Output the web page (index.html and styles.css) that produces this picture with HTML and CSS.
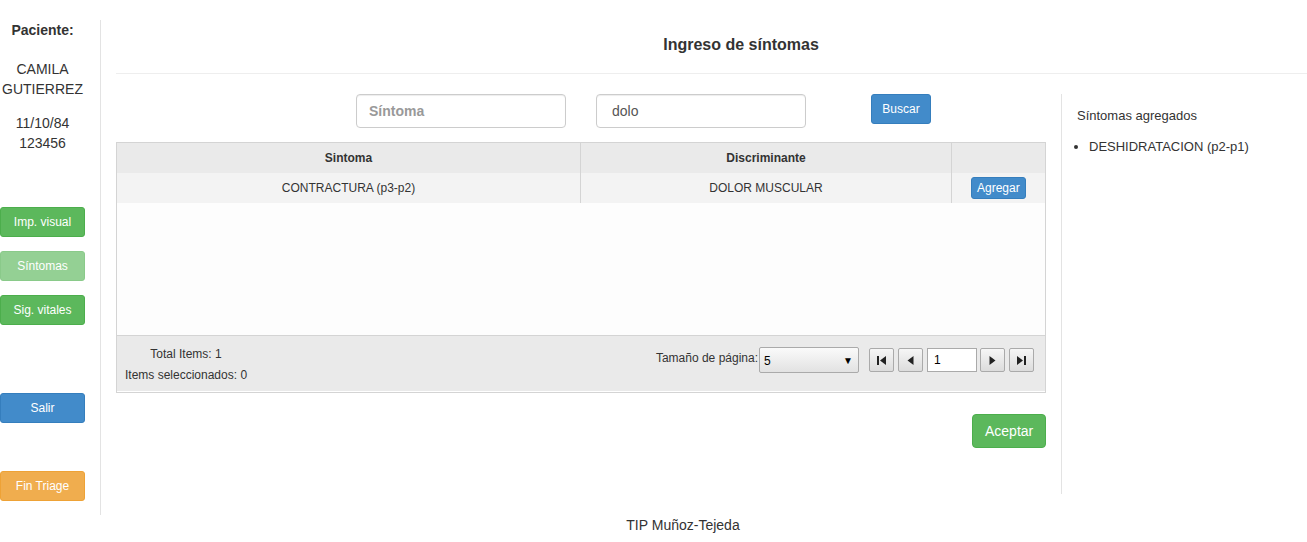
FILE: index.html
```html
<!DOCTYPE html>
<html lang="es">
<head>
<meta charset="utf-8">
<title>Ingreso de síntomas</title>
<link rel="stylesheet" href="styles.css">
</head>
<body>
<div class="page">
  <div class="layout">
    <aside class="sidebar">
      <div class="patient-label">Paciente:</div>
      <div class="patient-name">CAMILA<br>GUTIERREZ</div>
      <div class="patient-data">11/10/84<br>123456</div>
      <div class="nav">
        <button class="btn btn-sm btn-success">Imp. visual</button>
        <button class="btn btn-sm btn-success disabled">Síntomas</button>
        <button class="btn btn-sm btn-success">Sig. vitales</button>
      </div>
      <button class="btn btn-sm btn-primary salir">Salir</button>
      <button class="btn btn-sm btn-warning fin">Fin Triage</button>
    </aside>
    <main class="main">
      <header class="main-header"><h1>Ingreso de síntomas</h1></header>
      <div class="content">
        <section class="left">
          <div class="search-row">
            <input class="form-control" type="text" placeholder="Síntoma">
            <input class="form-control second" type="text" value="dolo">
            <button class="btn btn-sm btn-primary buscar">Buscar</button>
          </div>
          <div class="grid">
            <div class="grid-row grid-head">
              <div class="c1">Sintoma</div>
              <div class="c2">Discriminante</div>
              <div class="c3"></div>
            </div>
            <div class="grid-row grid-body-row">
              <div class="c1">CONTRACTURA (p3-p2)</div>
              <div class="c2">DOLOR MUSCULAR</div>
              <div class="c3"><button class="btn btn-xs btn-primary">Agregar</button></div>
            </div>
            <div class="grid-viewport"></div>
            <div class="grid-footer">
              <div class="totals">
                <div>Total Items: 1</div>
                <div>Items seleccionados: 0</div>
              </div>
              <div class="pager">
                <span class="page-size-label">Tamaño de página:</span>
                <div class="select"><span>5</span><span class="caret">▼</span></div>
                <div class="pager-btns">
                  <button class="pbtn" aria-label="primera"><svg width="11" height="11" viewBox="0 0 11 11"><rect x="1" y="1" width="2" height="9" fill="#222"/><path d="M10 1 L4 5.5 L10 10 Z" fill="#222"/></svg></button>
                  <button class="pbtn" aria-label="anterior"><svg width="11" height="11" viewBox="0 0 11 11"><path d="M8.5 1 L2.5 5.5 L8.5 10 Z" fill="#222"/></svg></button>
                  <input class="page-input" type="text" value="1">
                  <button class="pbtn" aria-label="siguiente"><svg width="11" height="11" viewBox="0 0 11 11"><path d="M2.5 1 L8.5 5.5 L2.5 10 Z" fill="#222"/></svg></button>
                  <button class="pbtn" aria-label="última"><svg width="11" height="11" viewBox="0 0 11 11"><path d="M1 1 L7 5.5 L1 10 Z" fill="#222"/><rect x="8" y="1" width="2" height="9" fill="#222"/></svg></button>
                </div>
              </div>
            </div>
          </div>
          <div class="actions"><button class="btn btn-success aceptar">Aceptar</button></div>
        </section>
        <section class="right">
          <div class="right-title">Síntomas agregados</div>
          <ul class="added">
            <li>DESHIDRATACION (p2-p1)</li>
          </ul>
        </section>
      </div>
    </main>
  </div>
  <footer class="page-footer">TIP Muñoz-Tejeda</footer>
</div>
</body>
</html>
```
FILE: styles.css
```css
html, body {
  margin: 0;
  padding: 0;
  overflow: hidden;
}
body {
  font-family: "Liberation Sans", Arial, sans-serif;
  font-size: 14px;
  line-height: 20px;
  color: #333;
  background: #fff;
}
.page {
  width: 1366px;
  padding-top: 20px;
}
.layout {
  display: flex;
}
.sidebar {
  width: 85px;
  padding-right: 15px;
  border-right: 1px solid #e3e3e3;
  height: 495px;
  display: flex;
  flex-direction: column;
  align-items: stretch;
  text-align: center;
}
.patient-label {
  font-weight: bold;
}
.patient-name {
  margin-top: 19px;
}
.patient-data {
  margin-top: 14px;
}
.nav {
  display: flex;
  flex-direction: column;
  gap: 14px;
  margin-top: 54px;
}
.btn {
  font-family: "Liberation Sans", Arial, sans-serif;
  display: inline-block;
  border: 1px solid transparent;
  border-radius: 4px;
  font-size: 14px;
  line-height: 20px;
  padding: 6px 12px;
  color: #fff;
  cursor: pointer;
  text-align: center;
}
.btn-sm {
  font-size: 12px;
  line-height: 18px;
  padding: 5px 10px;
  border-radius: 3px;
}
.btn-xs {
  font-size: 12px;
  line-height: 18px;
  padding: 1px 5px;
  border-radius: 3px;
}
.btn-success {
  background: #5cb85c;
  border-color: #4cae4c;
}
.btn-success.disabled {
  opacity: 0.65;
}
.btn-primary {
  background: #428bca;
  border-color: #357ebd;
}
.btn-warning {
  background: #f0ad4e;
  border-color: #eea236;
}
.sidebar .btn {
  width: 85px;
  height: 30px;
}
.salir {
  margin-top: 68px;
}
.fin {
  margin-top: 48px;
}
.main {
  flex: 1;
  padding-left: 15px;
}
.main-header {
  border-bottom: 1px solid #eee;
  padding: 16px 0 19px;
  text-align: center;
}
.main-header h1 {
  margin: 0;
  font-size: 16px;
  line-height: 18px;
  font-weight: bold;
}
.content {
  display: flex;
  margin-top: 20px;
}
.left {
  width: 930px;
}
.search-row {
  display: flex;
  align-items: flex-start;
  padding-left: 240px;
  height: 34px;
}
.form-control {
  box-sizing: border-box;
  width: 210px;
  height: 34px;
  border: 1px solid #ccc;
  border-radius: 4px;
  padding: 6px 12px;
  font-family: "Liberation Sans", Arial, sans-serif;
  font-size: 14px;
  color: #555;
  box-shadow: inset 0 1px 1px rgba(0,0,0,0.075);
}
.form-control::placeholder {
  color: #999;
  font-weight: bold;
}
.form-control.second {
  margin-left: 30px;
  padding-left: 15px;
}
.buscar {
  margin-left: 65px;
  width: 60px;
  height: 30px;
}
.grid {
  margin-top: 14px;
  border: 1px solid #d4d4d4;
  height: 249px;
  display: flex;
  flex-direction: column;
  font-size: 12px;
  background: #fdfdfd;
}
.grid-row {
  display: flex;
  height: 30px;
}
.grid-row > div {
  display: flex;
  align-items: center;
  justify-content: center;
  box-sizing: border-box;
}
.grid-row .c1 { width: 464px; border-right: 1px solid #d4d4d4; }
.grid-row .c2 { width: 371px; border-right: 1px solid #d4d4d4; }
.grid-row .c3 { flex: 1; }
.grid-head {
  background: #eaeaea;
  font-weight: bold;
}
.grid-body-row {
  background: #f3f3f3;
}
.grid-body-row .c3 {
  justify-content: flex-start;
  padding-left: 19px;
}
.grid-viewport {
  flex: 1;
}
.grid-footer {
  height: 55px;
  border-top: 1px solid #d4d4d4;
  border-bottom: 1px solid #fff;
  background: #eaeaea;
  display: flex;
  justify-content: space-between;
  align-items: flex-start;
}
.totals {
  padding-left: 8px;
  padding-top: 8px;
  text-align: center;
  line-height: 21px;
}
.pager {
  display: flex;
  align-items: flex-start;
  padding-top: 11px;
  padding-right: 11px;
}
.page-size-label {
  margin-top: 2px;
  line-height: 18px;
  margin-right: 1px;
}
.select {
  box-sizing: border-box;
  width: 100px;
  height: 26px;
  border: 1px solid #aaa;
  border-radius: 2px;
  background: linear-gradient(#fafafa, #e2e2e2);
  display: flex;
  align-items: center;
  justify-content: space-between;
  padding: 2px 5px 0 4px;
  font-size: 12px;
  color: #000;
}
.caret {
  font-size: 10px;
}
.pager-btns {
  display: flex;
  align-items: center;
  margin-left: 10px;
  margin-top: 1px;
}
.pbtn {
  box-sizing: border-box;
  width: 25px;
  height: 24px;
  border: 1px solid #aaa;
  border-radius: 2px;
  background: linear-gradient(#f6f6f6, #dcdcdc);
  padding: 0;
  display: flex;
  align-items: center;
  justify-content: center;
  margin-right: 4px;
}
.pbtn:last-child { margin-right: 0; }
.page-input {
  box-sizing: border-box;
  width: 50px;
  height: 24px;
  border: 1px solid #aaa;
  margin-right: 3px;
  padding: 0 6px;
  font-family: "Liberation Sans", Arial, sans-serif;
  font-size: 12px;
  color: #000;
}
.actions {
  display: flex;
  justify-content: flex-end;
  margin-top: 21px;
}
.aceptar {
  width: 74px;
  height: 34px;
}
.right {
  flex: 1;
  margin-left: 15px;
  border-left: 1px solid #e3e3e3;
  height: 400px;
  padding-left: 15px;
  font-size: 13px;
}
.right-title {
  margin-top: 12px;
}
.added {
  margin: 12px 0 0;
  padding-left: 12px;
}
.added li {
  line-height: 18px;
}
.page-footer {
  width: 1366px;
  text-align: center;
  line-height: 20px;
}
```
